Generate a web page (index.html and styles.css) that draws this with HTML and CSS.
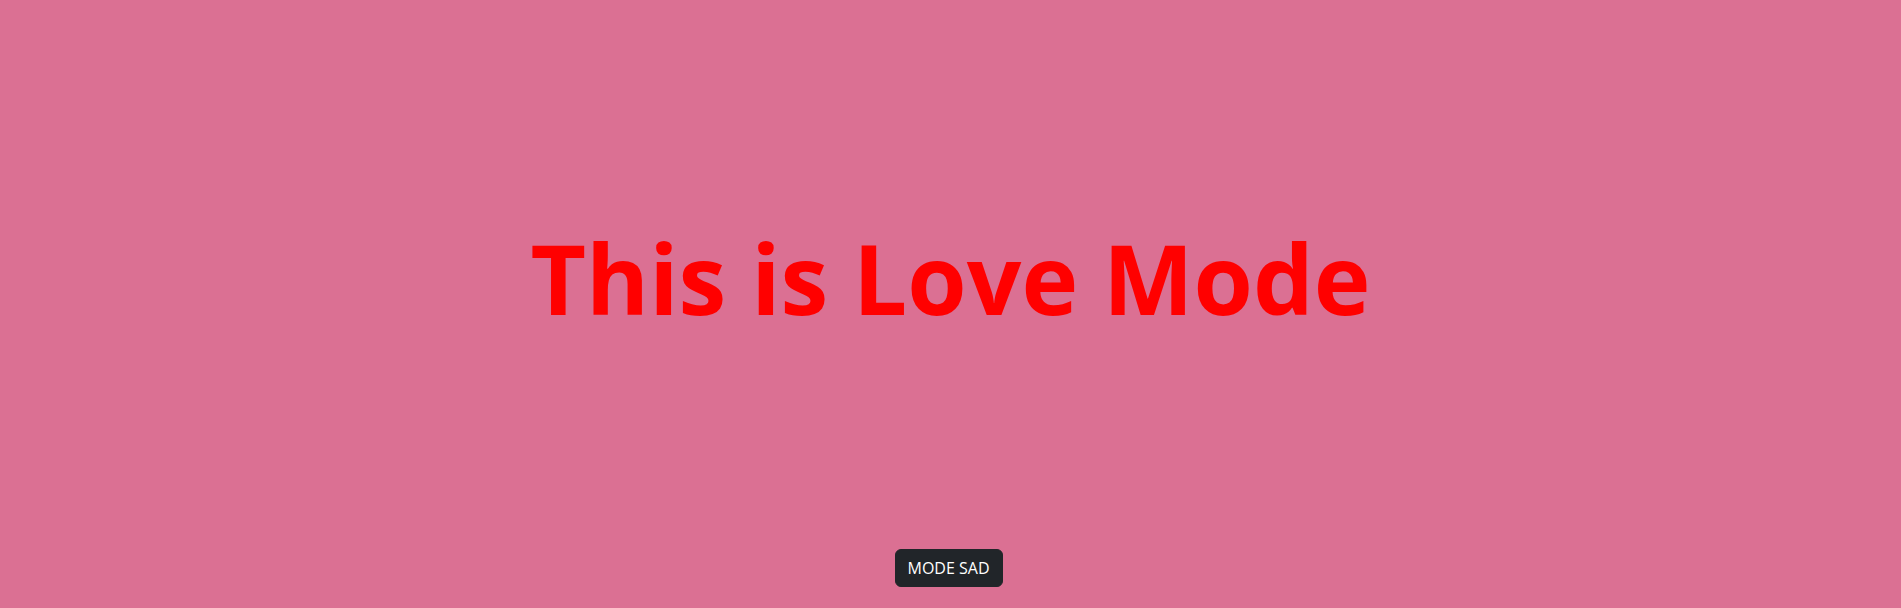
FILE: index.html
```html
<!DOCTYPE html>
<html lang="en">
<head>
<meta charset="utf-8">
<title>Love Mode</title>
<link rel="stylesheet" href="styles.css">
</head>
<body>
<div class="page">
  <main class="stage">
    <h1 class="title">This is Love Mode</h1>
  </main>
  <footer class="controls">
    <button class="btn-dark" type="button">MODE SAD</button>
  </footer>
</div>
</body>
</html>
```

FILE: styles.css
```css
html, body {
  margin: 0;
  padding: 0;
  height: 100%;
}
body {
  background: #db7093;
  font-family: "Open Sans", "Noto Sans", "Liberation Sans", sans-serif;
}
.page {
  display: flex;
  flex-direction: column;
  height: 100vh;
}
.stage {
  flex: 1;
  display: flex;
  align-items: center;
  justify-content: center;
  padding-top: 7px;
}
.title {
  margin: 0;
  color: #ff0000;
  font-size: 96px;
  font-weight: 700;
  line-height: 1.2;
}
.controls {
  display: flex;
  justify-content: center;
  padding-bottom: 21px;
  padding-right: 4px;
}
.btn-dark {
  background: #212529;
  color: #ffffff;
  border: 1px solid #212529;
  border-radius: 6px;
  padding: 6px 12px;
  font-family: "Open Sans", "Noto Sans", sans-serif;
  font-size: 16px;
  line-height: 24px;
  cursor: pointer;
}
```
